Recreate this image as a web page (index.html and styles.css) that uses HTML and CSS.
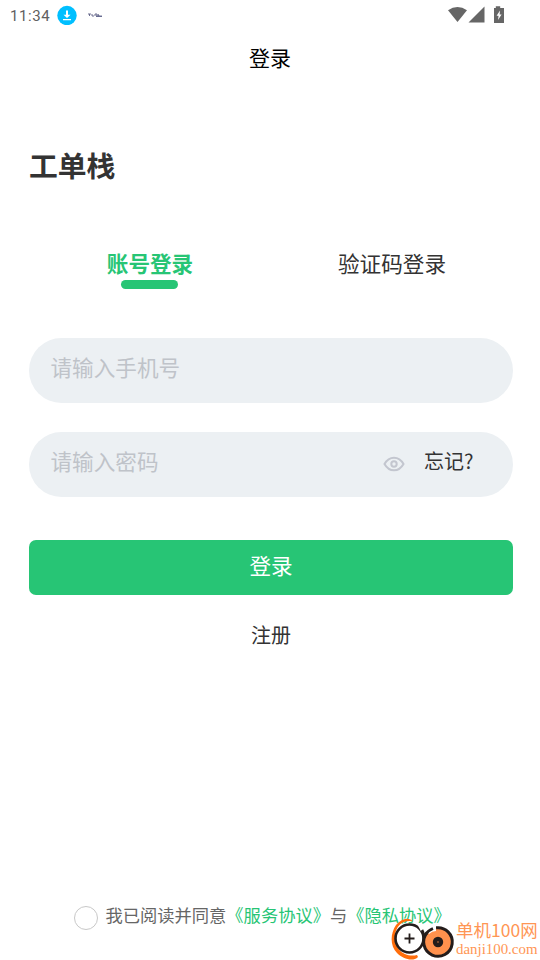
FILE: index.html
```
<!DOCTYPE html>
<html lang="zh-CN">
<head>
<meta charset="utf-8">
<title>登录</title>
<link rel="stylesheet" href="styles.css">
</head>
<body>
<div class="screen">
  <div class="status">
    <span class="clock">11:34</span>
    <svg class="download" width="20" height="20" viewBox="0 0 20 20"><circle cx="10" cy="10.500" r="9.700" fill="#00bfff"/><path d="M9 5.500h2v4.200h2.500L10 13 6.500 9.700H9zM6 14h8v1.200H6z" fill="#fff"/></svg>
    <svg class="notice" width="16" height="6" viewBox="0 0 16 6"><path d="M1 2h3M2.500 2v2M5 2v2h2M8 4V2h2v2M11 2l1 2" fill="none" stroke="#5b5e83" stroke-width=".9"/><path d="M9 4.200h6" stroke="#252b62"/></svg>
    <svg class="signals" width="58" height="20" viewBox="0 0 58 20"><path d="M0 5.200Q9.500-1 19 5.200L9.500 17z" fill="#666"/><path d="M36.500 1.500V17.500H20.500z" fill="#666"/><path d="M46 3h1.800V1.200h4.400V3H56v15H46z" fill="#666" transform="translate(0 0)"/><path d="M52 5.500l-3.400 5.300h2L50 15l3.600-5.500h-2z" fill="#fff"/></svg>
  </div>
  <header class="nav">登录</header>
  <main class="content">
    <h1 class="brand">工单栈</h1>
    <div class="tabs">
      <div class="tab active">账号登录</div>
      <div class="tab">验证码登录</div>
    </div>
    <div class="field">请输入手机号</div>
    <div class="field password">
      <span class="hint">请输入密码</span>
      <svg class="eye" width="22" height="16" viewBox="0 0 22 16"><path d="M1.500 8Q5 1.700 11 1.700T20.500 8Q17 14.300 11 14.300T1.500 8z" fill="none" stroke="#c3c6cf" stroke-width="2"/><circle cx="11" cy="8" r="2.700" fill="none" stroke="#c3c6cf" stroke-width="2"/></svg>
      <span class="forgot">忘记?</span>
    </div>
    <div class="submit">登录</div>
    <div class="register">注册</div>
  </main>
  <footer class="agreement">
    <span class="radio"></span>
    <span class="terms">我已阅读并同意<b>《服务协议》</b>与<b>《隐私协议》</b></span>
  </footer>
  <div class="watermark">
    <svg width="65" height="44" viewBox="0 0 65 44"><path d="M22 4.500C18-.5 10 1.500 5 8-1 17-1 29 6 36c6 6 16 9 21 4l-1-2C20 39.500 12 38 7.500 32 2 24 3 13 9 7.500 13 4 18 3.500 22 4.500z" fill="#ff6d0b"/><circle cx="18.500" cy="21.500" r="14" fill="#fff" stroke="#231c1b" stroke-width="2.600"/><path d="M13.500 21.500h10M18.500 16.500v10" stroke="#231c1b" stroke-width="1.800"/><path d="M26 6.500l5-1 1 8-2 1z" fill="#fff"/><circle cx="47" cy="25" r="14" fill="#ff914d"/><path d="M45 10.800A14.300 14.300 0 1 1 36 15.800" fill="none" stroke="#231c1b" stroke-width="3"/><path d="M36 14.500L39 8l6 0v6q-4 0-7 3z" fill="#fff"/><path d="M31 13q1.500 2 1.500 6M42 11.500q-5 2-7.500 6" fill="none" stroke="#231c1b" stroke-width="2.800"/><circle cx="47" cy="25" r="5.200" fill="#231c1b"/><circle cx="47" cy="25" r=".7" fill="#ff914d"/></svg>
    <div class="site"><span class="site-name">单机100网</span><span class="site-url">danji100.com</span></div>
  </div>
</div>
</body>
</html>
```

FILE: styles.css
```
body {
  margin: 0;
  background: #fff;
  color: #333;
  font-family: "Noto Sans CJK SC", sans-serif;
}
.screen {
  position: relative;
  display: flex;
  flex-direction: column;
  width: 540px;
  height: 960px;
  overflow: hidden;
}
.status {
  display: flex;
  align-items: center;
  height: 30px;
  padding: 0 34px 0 10px;
  box-sizing: border-box;
}
.clock {
  width: 47px;
  padding-top: 2px;
  font: 400 15px/20px Roboto, sans-serif;
  letter-spacing: .6px;
  color: #606060;
}
.notice { margin-left: 10px; }
.signals { margin-left: auto; }
.nav {
  height: 56px;
  line-height: 54px;
  text-align: center;
  font-size: 21px;
  color: #000;
}
.content {
  padding: 59px 27px 0 29px;
}
.brand {
  margin: 0;
  font-size: 28.8px;
  line-height: 40px;
  font-weight: 700;
}
.tabs {
  display: grid;
  grid-template-columns: 1fr 1fr;
  margin-top: 64px;
  height: 89px;
}
.tab {
  display: flex;
  flex-direction: column;
  align-items: center;
  font-size: 21.6px;
  line-height: 28px;
}
.active {
  color: #27c575;
  font-weight: 700;
}
.active::after {
  content: "";
  width: 57px;
  height: 9px;
  margin: 3px 1px 0 0;
  border-radius: 5px;
  background: #27c575;
}
.field {
  height: 65px;
  box-sizing: border-box;
  padding: 0 21.5px;
  border-radius: 33px;
  background: #ecf0f3;
  color: #bfc3c9;
  font-size: 21.6px;
  line-height: 58px;
}
.password {
  display: flex;
  margin-top: 29px;
  padding-right: 36px;
}
.hint { flex: 1; }
.eye { margin: 24px 19.5px 0 0; }
.forgot {
  width: 53px;
  color: #333;
  font-size: 20px;
  line-height: 58px;
}
.submit {
  height: 55px;
  margin-top: 43px;
  border-radius: 7px;
  background: #27c575;
  color: #fff;
  font-size: 21.6px;
  line-height: 50px;
  text-align: center;
}
.register {
  margin-top: 25px;
  font-size: 20px;
  line-height: 30px;
  text-align: center;
}
.agreement {
  display: flex;
  align-items: center;
  height: 24px;
  margin: auto 0 30px 74px;
}
.radio {
  width: 22px;
  height: 22px;
  margin-right: 7.5px;
  border: 1px solid #c8c8c8;
  border-radius: 50%;
}
.terms {
  margin-top: -7px;
  color: #666;
  font-size: 17.28px;
  line-height: 24px;
  white-space: nowrap;
}
.terms b {
  color: #27c575;
  font-weight: 400;
}
.watermark {
  position: absolute;
  left: 391px;
  top: 917px;
  display: flex;
  color: #ff9654;
}
.site {
  display: flex;
  flex-direction: column;
  white-space: nowrap;
}
.site-name {
  font-size: 17.5px;
  line-height: 26px;
}
.site-url {
  font: 14.9px/12px "Liberation Serif", serif;
}
```
